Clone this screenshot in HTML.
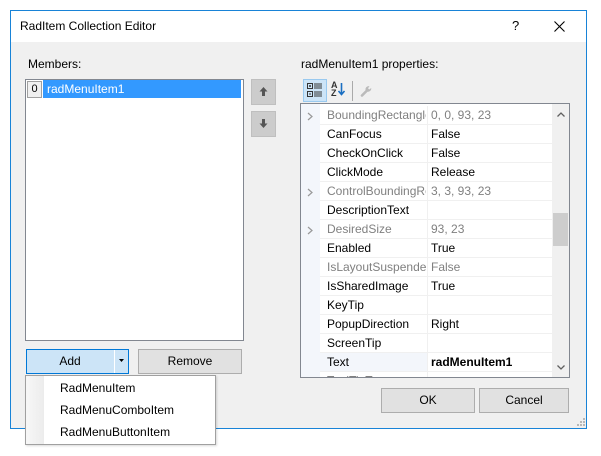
<!DOCTYPE html><html><head><style>
*{margin:0;padding:0;box-sizing:border-box}
html,body{width:601px;height:456px;overflow:hidden}
body{background:#fff;font-family:"Liberation Sans",sans-serif;font-size:12px;color:#000;position:relative}
.a{position:absolute}
.win{left:10px;top:10px;width:577px;height:419px;border:1px solid #1883d7;background:#f0f0f0}
.tb{left:11px;top:11px;width:575px;height:31px;background:#fff}
.btn{background:#e1e1e1;border:1px solid #adadad;text-align:center;line-height:23px}
.row{position:absolute;left:19px;width:232px;height:19px;border-bottom:1px solid #f0f0f0;line-height:18px}
.row .n{position:absolute;left:7px;top:0;width:99px;overflow:hidden;white-space:nowrap}
.row .v{position:absolute;left:111px;top:0}
.row .sep{position:absolute;left:107px;top:0;width:1px;height:19px;background:#f0f0f0}
.g{color:#808080}
.chev{position:absolute;left:6px}
</style></head><body>
<div class="a win"></div>
<div class="a tb"></div>
<div class="a" style="left:20px;top:19px;font-size:12px">RadItem Collection Editor</div>
<div class="a" style="left:512px;top:18px;font-size:13px">?</div>
<svg class="a" style="left:554px;top:21px" width="11" height="11"><path d="M0.5 0.5L10.5 10.5M10.5 0.5L0.5 10.5" stroke="#000" stroke-width="1.1"/></svg>

<div class="a" style="left:28px;top:57px">Members:</div>
<div class="a" style="left:25px;top:79px;width:219px;height:262px;background:#fff;border:1px solid #828790"></div>
<div class="a" style="left:27px;top:81px;width:15px;height:17px;background:#f0f0f0;border:1px solid #a0a0a0;line-height:15px;text-align:center;font-size:11px">0</div>
<div class="a" style="left:43px;top:80px;width:198px;height:18px;background:#3399ff;color:#fff;line-height:18px;padding-left:4px">radMenuItem1</div>
<div class="a" style="left:251px;top:79px;width:25px;height:26px;background:#ccc;border:1px solid #bfbfbf"></div>
<svg class="a" style="left:258px;top:86px" width="11" height="11"><path d="M5.5 1L1.5 5.5H4V10H7V5.5H9.5Z" fill="#555"/></svg>
<div class="a" style="left:251px;top:111px;width:25px;height:26px;background:#ccc;border:1px solid #bfbfbf"></div>
<svg class="a" style="left:258px;top:118px" width="11" height="11"><path d="M5.5 10L1.5 5.5H4V1H7V5.5H9.5Z" fill="#555"/></svg>

<div class="a" style="left:26px;top:349px;width:103px;height:25px;background:#cce4f7;border:1px solid #0078d7"></div>
<div class="a" style="left:26px;top:354px;width:88px;text-align:center">Add</div>
<div class="a" style="left:114px;top:350px;width:1px;height:23px;background:#fff"></div>
<svg class="a" style="left:119px;top:359px" width="6" height="4"><path d="M0 0H5L2.5 3Z" fill="#000"/></svg>
<div class="a btn" style="left:138px;top:349px;width:104px;height:25px">Remove</div>

<div class="a" style="left:25px;top:375px;width:191px;height:70px;background:#fff;border:1px solid #a0a0a0;box-shadow:1px 1px 2px rgba(0,0,0,.15)"></div>
<div class="a" style="left:26px;top:376px;width:18px;height:68px;background:linear-gradient(90deg,#f7f7f7,#ececec)"></div>
<div class="a" style="left:60px;top:381px">RadMenuItem</div>
<div class="a" style="left:60px;top:403px">RadMenuComboItem</div>
<div class="a" style="left:60px;top:425px">RadMenuButtonItem</div>

<div class="a" style="left:301px;top:57px">radMenuItem1 properties:</div>
<div class="a" style="left:303px;top:79px;width:24px;height:23px;background:#cce4f7;border:1px solid #99c9ef"></div>
<svg class="a" style="left:307px;top:83px" width="16" height="15"><rect x="0.5" y="0.5" width="5" height="5" fill="none" stroke="#333"/><rect x="0.5" y="8.5" width="5" height="5" fill="none" stroke="#333"/><path d="M2 3H4M3 2V4M2 11H4M7 1H15M7 3H15M7 5H15M7 9H15M7 11H15M7 13H15" stroke="#333"/></svg>
<div class="a" style="left:331px;top:81px;font-size:9px;font-weight:bold;line-height:8px;color:#333">A<br>Z</div>
<svg class="a" style="left:338px;top:83px" width="7" height="13"><path d="M3.5 0V11M0.5 8L3.5 11.5L6.5 8" stroke="#1a6fc2" stroke-width="1.6" fill="none"/></svg>
<div class="a" style="left:352px;top:81px;width:1px;height:20px;background:#aaa"></div>
<svg class="a" style="left:360px;top:84px" width="13" height="13"><path d="M2 11.5L7 6.5" stroke="#bbb" stroke-width="2.6" stroke-linecap="round"/><path d="M6 7A3.2 3.2 0 0 1 9.5 2.2L8 4.2L9.2 5.5L11.2 4A3.2 3.2 0 0 1 6 7Z" fill="#bbb"/></svg>

<div class="a" style="left:300px;top:103px;width:270px;height:275px;background:#fff;border:1px solid #828790;overflow:hidden">
<div class="a" style="left:0;top:0;width:19px;height:273px;background:#f3f6fb"></div>
<div class="row" style="top:2px"><span class="n g">BoundingRectangle</span><span class="sep"></span><span class="v g">0, 0, 93, 23</span></div>
<div class="row" style="top:21px"><span class="n">CanFocus</span><span class="sep"></span><span class="v">False</span></div>
<div class="row" style="top:40px"><span class="n">CheckOnClick</span><span class="sep"></span><span class="v">False</span></div>
<div class="row" style="top:59px"><span class="n">ClickMode</span><span class="sep"></span><span class="v">Release</span></div>
<div class="row" style="top:78px"><span class="n g">ControlBoundingRectangle</span><span class="sep"></span><span class="v g">3, 3, 93, 23</span></div>
<div class="row" style="top:97px"><span class="n">DescriptionText</span><span class="sep"></span></div>
<div class="row" style="top:116px"><span class="n g">DesiredSize</span><span class="sep"></span><span class="v g">93, 23</span></div>
<div class="row" style="top:135px"><span class="n">Enabled</span><span class="sep"></span><span class="v">True</span></div>
<div class="row" style="top:154px"><span class="n g">IsLayoutSuspended</span><span class="sep"></span><span class="v g">False</span></div>
<div class="row" style="top:173px"><span class="n">IsSharedImage</span><span class="sep"></span><span class="v">True</span></div>
<div class="row" style="top:192px"><span class="n">KeyTip</span><span class="sep"></span></div>
<div class="row" style="top:211px"><span class="n">PopupDirection</span><span class="sep"></span><span class="v">Right</span></div>
<div class="row" style="top:230px"><span class="n">ScreenTip</span><span class="sep"></span></div>
<div class="row" style="top:249px;background:linear-gradient(90deg,#f3f6fb 107px,#fff 107px)"><span class="n">Text</span><span class="sep"></span><span class="v" style="font-weight:bold">radMenuItem1</span></div>
<div class="row" style="top:268px"><span class="n">ToolTipText</span><span class="sep"></span></div>
<svg class="chev" style="top:8px" width="6" height="9"><path d="M1 1L5 4.5L1 8" stroke="#999" fill="none" stroke-width="1.2"/></svg>
<svg class="chev" style="top:84px" width="6" height="9"><path d="M1 1L5 4.5L1 8" stroke="#999" fill="none" stroke-width="1.2"/></svg>
<svg class="chev" style="top:122px" width="6" height="9"><path d="M1 1L5 4.5L1 8" stroke="#999" fill="none" stroke-width="1.2"/></svg>
<div class="a" style="left:251px;top:0;width:17px;height:273px;background:#f0f0f0"></div>
<div class="a" style="left:252px;top:109px;width:15px;height:33px;background:#cdcdcd"></div>
<svg class="a" style="left:256px;top:8px" width="8" height="5"><path d="M0.5 4.5L4 1L7.5 4.5" stroke="#606060" fill="none" stroke-width="1.3"/></svg>
<svg class="a" style="left:256px;top:261px" width="8" height="5"><path d="M0.5 0.5L4 4L7.5 0.5" stroke="#606060" fill="none" stroke-width="1.3"/></svg>
</div>

<div class="a btn" style="left:381px;top:388px;width:94px;height:25px">OK</div>
<div class="a btn" style="left:479px;top:388px;width:90px;height:25px">Cancel</div>
<svg class="a" style="left:577px;top:418px" width="8" height="8"><g fill="#b8b8b8"><rect x="6" y="0" width="2" height="2"/><rect x="3" y="3" width="2" height="2"/><rect x="6" y="3" width="2" height="2"/><rect x="0" y="6" width="2" height="2"/><rect x="3" y="6" width="2" height="2"/><rect x="6" y="6" width="2" height="2"/></g></svg>
</body></html>
